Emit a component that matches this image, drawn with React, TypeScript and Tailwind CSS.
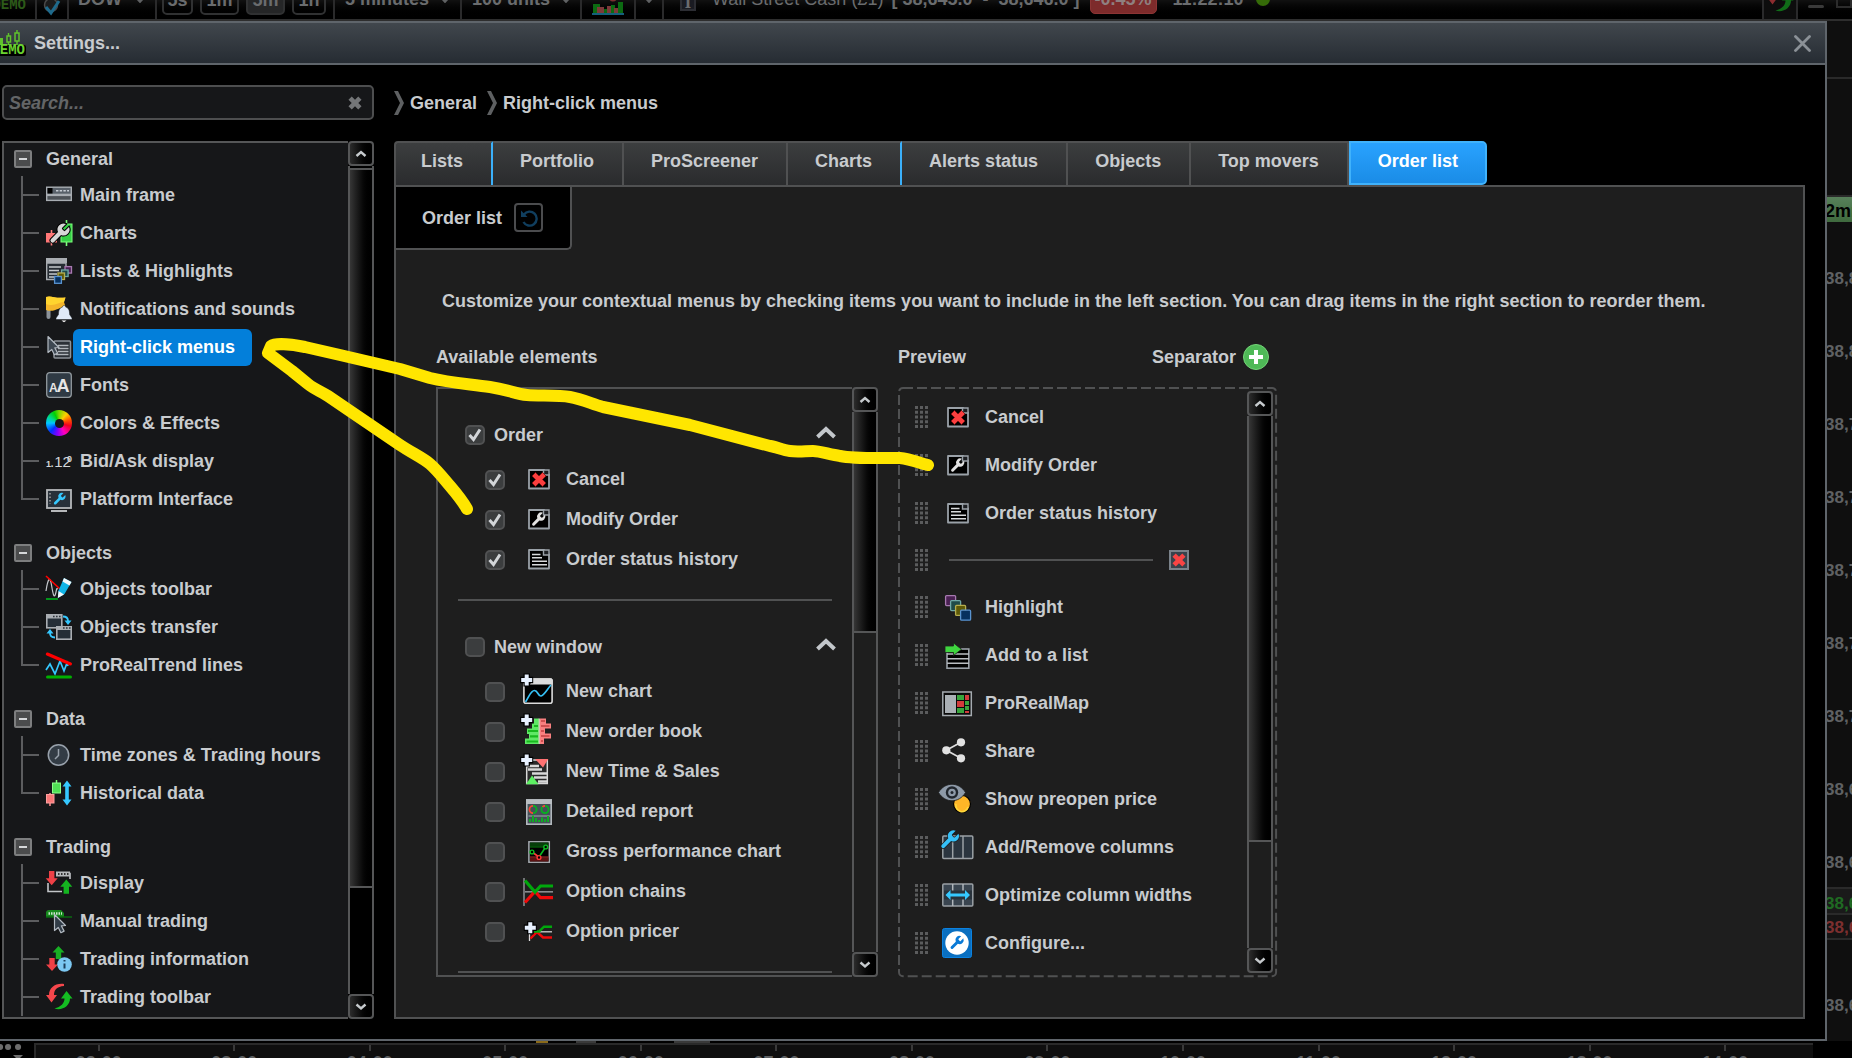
import { useId, type ReactNode } from "react";

const WRENCH =
  "M14.7 6.3a1 1 0 0 0 0 1.4l1.6 1.6a1 1 0 0 0 1.4 0l3.77-3.77a6 6 0 0 1-7.94 7.94l-6.91 6.91a2.12 2.12 0 0 1-3-3l6.91-6.91a6 6 0 0 1 7.94-7.94l-3.76 3.76z";
const UP = "M6 0 12 6.5H8.7V13H3.3V6.5H0z";
const DOWN = "M3.3 0H8.7V6.5H12L6 13 0 6.5H3.3z";
const CURSOR = "M0 0 11 11 6.8 11.3 9.6 16.6 6.4 18.2 3.8 13 0 16z";
const CROSS = "M3-.5 6.500 3 10-.5 13.500 3 10 6.500 13.500 10 10 13.500 6.500 10 3 13.500-.5 10 3 6.500-.5 3z";

/* ---------- icon frames ---------- */

function Small({ children }: { children: ReactNode }) {
  return (
    <svg viewBox="0 0 26 26" className="size-[26px] shrink-0 overflow-visible" aria-hidden="true">
      {children}
    </svg>
  );
}

function Large({ children }: { children: ReactNode }) {
  return (
    <svg viewBox="0 0 34 34" className="size-[34px] shrink-0 overflow-visible" aria-hidden="true">
      {children}
    </svg>
  );
}

function Squares() {
  return (
    <g strokeWidth="1.3">
      <rect x="4.6" y="5.6" width="10" height="10" rx="1" fill="#4a2153" stroke="#a77ab0" />
      <rect x="9.6" y="10.6" width="10" height="10" rx="1" fill="#1f4b49" stroke="#6fa9a6" />
      <rect x="14.6" y="15.4" width="10" height="10" rx="1" fill="#5f5a08" stroke="#b5ad4e" />
      <rect x="19.6" y="20.2" width="10" height="10" rx="1" fill="#07315f" stroke="#5a93cf" />
    </g>
  );
}

function Plus({ x, y }: { x: number; y: number }) {
  return (
    <g transform={`translate(${x} ${y})`}>
      <path d="M0-6.500V6.500M-6.500 0H6.500" stroke="#000" strokeWidth="6.500" />
      <path d="M0-5.500V5.500M-5.500 0H5.500" stroke="#e8f1ff" strokeWidth="4" />
    </g>
  );
}

function Doc({ children }: { children?: ReactNode }) {
  return (
    <Large>
      <path d="M7 8H22L27 12.5V26.5H7z" fill="#000" stroke="#9aa1a8" strokeWidth="1.8" strokeLinejoin="round" />
      <path d="M21.5 8V13H27V8z" fill="#1c1e21" stroke="#9aa1a8" strokeWidth="1.4" />
      {children}
    </Large>
  );
}

/* ---------- sidebar icons ---------- */

const MainFrame = () => (
  <Small>
    <rect x=".7" y="5.2" width="24.6" height="7.2" fill="#59616a" stroke="#a8adb2" strokeWidth="1.4" />
    <rect x="1.5" y="6" width="5" height="5.5" fill="#000" />
    <path d="M10 8.7H23" stroke="#c7cdd4" strokeWidth="1.5" strokeDasharray="2.4 1.3" />
    <rect x=".7" y="13.4" width="24.6" height="5" fill="#4d5257" stroke="#a8adb2" strokeWidth="1.4" />
  </Small>
);
const ChartsIcon = () => (
  <Small>
    <path d="M5.5 10V25.5" stroke="#ff8080" strokeWidth="1.6" />
    <rect x="0" y="13" width="11" height="9.5" fill="#f77" />
    <path d="M20.5 0V26" stroke="#7dff7d" strokeWidth="1.6" />
    <rect x="15" y="4" width="11" height="18" fill="#35cf45" stroke="#7dff7d" />
    <path d={WRENCH} transform="translate(1.5 1.5)" fill="#d7d7d7" stroke="#000" strokeWidth="2" paintOrder="stroke" />
  </Small>
);
const ListsIcon = () => (
  <Small>
    <path d="M0 0H21V5H0z" fill="#a9adb2" />
    <path d="M.7 5V21.5H12L20 13V5z" fill="#262c33" stroke="#a9adb2" strokeWidth="1.4" />
    <path d="M3 9H15M3 12.500H13M3 16H11M3 19H9" stroke="#c5c9cd" strokeWidth="1.4" />
    <g strokeWidth="1.3">
      <rect x="19" y="8.600" width="6.500" height="6.500" fill="#4a2153" stroke="#a77ab0" />
      <rect x="15.600" y="12" width="6.500" height="6.500" fill="#1f4b49" stroke="#6fa9a6" />
      <rect x="12" y="15" width="6.500" height="6.500" fill="#5f5a08" stroke="#b5ad4e" />
      <rect x="8.600" y="18.500" width="6.800" height="6.800" fill="#07315f" stroke="#5a93cf" />
    </g>
  </Small>
);
const NotificationsIcon = () => (
  <Small>
    <path d="M2.500 12V21" stroke="#8b9299" strokeWidth="4" strokeLinecap="round" />
    <path d="M0 1C5-1 9 3 19.500 1.500L18 6 19.500 11C12 11 9 17 0 14z" fill="#f4b52a" />
    <path d="M0 1C5-1 9 3 19.500 1.500L18 6C12 6 9 11 0 8z" fill="#ffd42e" />
    <path d="M18 9.500c1 0 1.500.7 1.600 1.500 3.400 1 4 4 4 7.500l2.400 3.500v1.500H10V22l2.500-3.500c0-3.500.6-6.500 4-7.500.1-.8.500-1.500 1.500-1.500z" fill="#dfe9f7" stroke="#17181a" strokeWidth=".5" />
    <path d="M15.500 24.500H20.500L18 26.300z" fill="#fff" />
  </Small>
);
const MenuIcon = () => (
  <Small>
    <rect x="8" y="7" width="16.500" height="17" rx="1" fill="#2b3036" stroke="#8d9399" strokeWidth="1.500" />
    <path d="M12 11.500H22.500M12 14.500H22.500M12 17.500H22.500M10 20.500H22.500" stroke="#b0b5ba" strokeWidth="1.400" />
    <path d={CURSOR} transform="translate(2 2.500)" fill="#3e4852" stroke="#b3bac2" strokeWidth="1.200" strokeLinejoin="round" />
  </Small>
);
const FontsIcon = () => (
  <Small>
    <rect x=".7" y=".7" width="24.600" height="24.600" rx="3" fill="#2f3a44" stroke="#929a9f" strokeWidth="1.300" />
    <text x="3" y="20" fontSize="12" fontWeight="700" fill="#e6e6e6" fontFamily="Liberation Sans, sans-serif">
      A
    </text>
    <text x="10.500" y="20" fontSize="18" fontWeight="700" fill="#e6e6e6" fontFamily="Liberation Sans, sans-serif">
      A
    </text>
  </Small>
);
const ColorsIcon = () => (
  <span className="grid size-[26px] shrink-0 place-items-center rounded-full bg-[conic-gradient(#7bd800,#ffd000_40deg,#ff5000_75deg,#f00020_105deg,#ff00c0_150deg,#8000ff_190deg,#0030ff_225deg,#00c8ff_270deg,#00d890_300deg,#00d000_335deg,#7bd800)]">
    <span className="size-[9px] rounded-full bg-[#161719]" />
  </span>
);
const BidAskIcon = () => (
  <Small>
    <g fill="#d3d6d9" fontFamily="Liberation Sans, sans-serif">
      <text x="0" y="19" fontSize="9" fontWeight="700">1</text>
      <text x="4" y="19" fontSize="15" fontWeight="400">.12</text>
      <text x="21" y="14" fontSize="9" fontWeight="700">0</text>
    </g>
  </Small>
);
const PlatformIcon = () => (
  <Small>
    <rect x="1" y="4" width="24" height="18" fill="#28313a" stroke="#b5b8bb" strokeWidth="1.800" />
    <path d="M4 7V18" stroke="#aaa" strokeWidth="1.400" strokeDasharray="1.500 2" />
    <path d={WRENCH} transform="translate(6 5.500) scale(.62)" fill="#35c8ff" />
    <path d="M5 25H21" stroke="#c9cbcd" strokeWidth="1.800" />
  </Small>
);
const ObjectsToolbarIcon = () => (
  <Small>
    <path d="M0 15C2 2 4 0 5.500 9S8 23 9.500 18 10 12 12 13" fill="none" stroke="#c4c8cc" strokeWidth="1.200" />
    <path d="M0 0 14 13" stroke="#f00" strokeWidth="1.600" />
    <path d="M0 23H12" stroke="#00a41c" strokeWidth="1.800" />
    <path d="M18 2 25.500 6 18.500 18 12 22 12.500 14.500z" fill="#11b4e6" />
    <path d="M18 2 25.500 6 23.500 9.500 16.500 5.500zM12.500 15 18 18.500 11.800 22z" fill="#f4f8fa" />
  </Small>
);
const TransferIcon = () => (
  <Small>
    <rect x=".8" y=".8" width="15" height="13" fill="#252e37" stroke="#a9adb2" strokeWidth="1.600" />
    <path d="M0 2.500H16" stroke="#a9adb2" strokeWidth="4" />
    <path d="M7 2.500H15" stroke="#30363c" strokeWidth="1.600" strokeDasharray="1.600 1.400" />
    <path d="M17 2.500C21 2.500 22 4 22 7M9 23.500C5 23.500 4 22 4 19" fill="none" stroke="#35c8ff" strokeWidth="1.800" />
    <path d="M18.500 6.500H25.500L22 11zM.5 19.500H7.500L4 15z" fill="#35c8ff" />
    <rect x="10.800" y="13" width="14.400" height="12.200" fill="#252e37" stroke="#a9adb2" strokeWidth="1.600" />
    <path d="M10 14H26" stroke="#a9adb2" strokeWidth="4" />
    <path d="M17 14H25" stroke="#30363c" strokeWidth="1.600" strokeDasharray="1.600 1.400" />
  </Small>
);
const TrendIcon = () => (
  <Small>
    <path d="M0 18 4 12 9 22 14 9 18 19 21 11 22 14" fill="none" stroke="#35c8ff" strokeWidth="1.700" />
    <path d="M1.300 2 24.500 12" stroke="#f00" strokeWidth="3" strokeLinecap="round" />
    <path d="M1.500 25H24.500" stroke="#00b000" strokeWidth="3" strokeLinecap="round" />
  </Small>
);
const ClockIcon = () => (
  <Small>
    <circle cx="12.500" cy="13" r="10.200" fill="#333c45" stroke="#98a1ab" strokeWidth="1.500" />
    <path d="M12.500 7V13.500L9 17" fill="none" stroke="#98a1ab" strokeWidth="1.500" />
  </Small>
);
const HistoryIcon = () => (
  <Small>
    <path d="M10.500 0V4" stroke="#7dff7d" strokeWidth="1.500" />
    <rect x="6.500" y="3" width="8" height="10" fill="#50e055" stroke="#8dff8d" />
    <path d="M4 13V26" stroke="#ff9090" strokeWidth="1.500" />
    <rect x=".5" y="14.500" width="7.500" height="8.500" fill="#f87878" stroke="#ffa0a0" />
    <path d="M21 4V22" stroke="#35c8ff" strokeWidth="3.600" />
    <path d="M16.500 6.500H25.500L21 .5zM16.500 19.500H25.500L21 25.500z" fill="#35c8ff" />
  </Small>
);
const DisplayIcon = () => (
  <Small>
    <path d="M2 13V21.500H16M10 3.500H24V9" fill="none" stroke="#c2c5c8" strokeWidth="1.600" />
    <path d="M10 4H24" stroke="#b5b8bb" strokeWidth="5" />
    <path d="M12 4H23" stroke="#333" strokeWidth="2" strokeDasharray="1.500 1.500" />
    <path d={DOWN} transform="translate(-.3 1) scale(1 1.100)" fill="#ee4046" />
    <path d={UP} transform="translate(14.300 9.500) scale(1 1.100)" fill="#14b520" />
  </Small>
);
const ManualIcon = () => (
  <Small>
    <path d="M0 4a3 3 0 0 1 3-2H15l3 3V9H0z" fill="#178a1d" />
    <path d="M0 9H26" stroke="#0a6b10" strokeWidth="1.500" />
    <path d="M2.500 5.500H16" stroke="#c9e8ca" strokeWidth="2.500" strokeDasharray="1.500 1" />
    <path d={CURSOR} transform="translate(8.500 6.500)" fill="#323d48" stroke="#b3bac2" strokeWidth="1.200" strokeLinejoin="round" />
  </Small>
);
const InfoIcon = () => (
  <Small>
    <path d={UP} transform="translate(6.500 0)" fill="#18b024" />
    <path d={DOWN} transform="translate(0 12)" fill="#ee4046" />
    <circle cx="18.500" cy="18.500" r="7.300" fill="#7cc8f2" />
    <path d="M18.500 17.500V22.500M18.500 14V15.500" stroke="#1d3f5a" strokeWidth="2" />
  </Small>
);
const ArrowsIcon = () => (
  <Small>
    <path d="M18 0C9-1 3 4 3 11H0L5.500 18.500 11 11H8C8 6 11 2.500 18 2z" fill="#f5474c" />
    <path d="M8.500 24.500C16 27 24 22 24 14.500H26.500L20.500 7 15 14.500H18.500C18.500 19 15 23 8.500 24.500z" fill="#14bd22" />
  </Small>
);

/* ---------- menu element icons ---------- */

const CancelIcon = () => (
  <Doc>
    <path d={CROSS} transform="translate(10.500 11)" fill="#fb3f3f" stroke="#7a1010" strokeWidth=".8" />
  </Doc>
);
const ModifyIcon = () => (
  <Doc>
    <path d={WRENCH} transform="translate(8 9) scale(.7)" fill="#e2e2e2" />
  </Doc>
);
const StatusIcon = () => (
  <Doc>
    <path d="M10 12.500H18.500M10 15.800H20M10 19.200H25M10 22.800H25" stroke="#d8dadc" strokeWidth="1.500" />
  </Doc>
);
const NewChart = () => (
  <Large>
    <rect x="1.900" y="5" width="28.200" height="24.200" rx="2" fill="#000" stroke="#dcdcdc" strokeWidth="1.600" />
    <path d="M11 4.200H29.500L30.800 6V10.500H8z" fill="#dcdcdc" />
    <path d="M3.500 28C8 21 9 16.500 12.500 16.500S16 22.500 19 22 26 14 29 11" fill="none" stroke="#35c0f5" strokeWidth="1.700" />
    <Plus x={4.700} y={6} />
  </Large>
);
const OrderBook = () => (
  <Large>
    <path d="M12 4.500H17V30H3V24.500H7V20H5V14.500H10V9.500H12z" fill="#5fe866" />
    <path d="M6 17H16M8 22.300H16M4.500 27.500H16M12 12H16" stroke="#18b91f" strokeWidth="2.200" />
    <path d="M18 4.500H24V9.500H29V14.500H23V19.500H29V24.500H22V30H18z" fill="#f98080" />
    <path d="M19 7H23M19 12H27.500M19 17H22M19 22H27.500M19 27H21" stroke="#cf5050" strokeWidth="2.200" />
    <path d="M17.300 4.500V30" stroke="#e9d2c8" strokeWidth="1.200" />
    <Plus x={4.700} y={6} />
  </Large>
);
const TimeSales = () => (
  <Large>
    <rect x="4.700" y="6" width="20.600" height="23.500" fill="#2a2a2a" stroke="#d8d8d8" strokeWidth="1.500" />
    <path d="M5 12H17M6 15.500H20M10 19.500H25M12 23.500H25M16 27.500H25" stroke="#d8d8d8" strokeWidth="2.300" />
    <path d="M13 5H26.300L21 13.500z" fill="#ff7272" />
    <path d="M4 30.300H16.500L10 21.500z" fill="#5df062" />
    <Plus x={4.700} y={6} />
  </Large>
);
const Report = () => (
  <Large>
    <rect x="4.800" y="6" width="24.400" height="24.200" fill="#46505a" stroke="#b2b8bd" strokeWidth="1.600" />
    <path d="M4 5.200H30V10H4z" fill="#b9bec2" />
    <g fill="none" strokeWidth="1.800">
      <circle cx="11" cy="15.500" r="3.600" stroke="#05b41f" />
      <path d="M11 11.900A3.600 3.600 0 0 0 11 19.100" stroke="#ff3b3b" />
      <circle cx="23" cy="15.500" r="3.600" stroke="#05b41f" />
      <path d="M20.500 13A3.600 3.600 0 0 1 23 11.900" stroke="#ff3b3b" />
    </g>
    <path d="M6.500 22H28" stroke="#747c84" strokeWidth="2" />
    <path d="M8 28V25M11 28V21.500M14 28V24M17 28V26M20 28V23.500M23 28V25M26 28V22" stroke="#0cb520" strokeWidth="1.800" />
  </Large>
);
const GrossChart = () => (
  <Large>
    <rect x="6.900" y="7.800" width="20.400" height="20.400" fill="#000" stroke="#a7adb2" strokeWidth="1.500" />
    <path d="M8 10.500H26.500" stroke="#063f0a" strokeWidth="4" />
    <path d="M8 13H26.500" stroke="#07800f" />
    <path d="M8 25.500H26.500" stroke="#5b1212" strokeWidth="4" />
    <path d="M8 23H26.500" stroke="#b02c2c" />
    <path d="M10 18 17 23" stroke="#ff3838" strokeWidth="1.600" />
    <path d="M18 21.500 23.700 13" stroke="#0cbb22" strokeWidth="1.600" />
    <g fill="#000" strokeWidth="1.400">
      <circle cx="10" cy="18" r="1.900" stroke="#0cbb22" />
      <circle cx="17" cy="23.500" r="1.900" stroke="#ff3838" />
      <circle cx="23.700" cy="13" r="1.900" stroke="#0cbb22" />
    </g>
  </Large>
);
const OptionChains = () => (
  <Large>
    <path d="M2 4V32" stroke="#7a7c7f" strokeWidth="1.800" />
    <path d="M3 17.800H31" stroke="#8a8c8f" strokeWidth="1.600" />
    <path d="M3 28.500 13 17.500 18.500 23.700H31" fill="none" stroke="#f00a0a" strokeWidth="3.200" />
    <path d="M3 6.500 13 18 18.500 12H31" fill="none" stroke="#00a80c" strokeWidth="3.200" />
  </Large>
);
const OptionPricer = () => (
  <Large>
    <path d="M7.500 14V27" stroke="#e0e0e0" strokeWidth="1.300" />
    <path d="M14 17.800H30" stroke="#d0d0d0" strokeWidth="1.300" />
    <path d="M8.500 24.500 15 18 21 23.500H30" fill="none" stroke="#f00a0a" strokeWidth="2.400" />
    <path d="M12 17.500H17L22 12.700H30" fill="none" stroke="#00a80c" strokeWidth="2.400" />
    <Plus x={8.300} y={13.700} />
  </Large>
);
const HighlightIcon = () => (
  <Large>
    <Squares />
  </Large>
);
const AddList = () => (
  <Large>
    <rect x="6" y="11" width="21.800" height="19.200" fill="#000" stroke="#9aa1a8" strokeWidth="1.600" />
    <path d="M6 16H28M6 20.700H28M6 25.300H28" stroke="#b9bdc1" strokeWidth="1.500" />
    <path d="M4 8H12.500V5L20.500 11.300 12.500 17.500V14.500H4z" fill="#3fd63f" stroke="#1e1e1e" strokeWidth=".8" />
  </Large>
);
const MapIcon = () => (
  <Large>
    <rect x="1.800" y="6" width="28.500" height="23.500" fill="#0a0a0a" stroke="#a5abb0" strokeWidth="1.500" />
    <path d="M4 9H15V27H4z" fill="#aab0b5" />
    <path d="M16 9H23V14H16zM16 22H23V27H16zM24 15H28V19H24zM24 20H28V24H24z" fill="#38a53c" />
    <path d="M16 15H23V21H16zM24 9H28V14H24zM24 25H28V27H24z" fill="#d13c3c" />
  </Large>
);
const ShareIcon = () => (
  <Large>
    <path d="M20 8.300 5.300 16.300 20 24.300" fill="none" stroke="#dedede" strokeWidth="1.700" />
    <g fill="#e2e2e2">
      <circle cx="5.300" cy="16.300" r="4.100" />
      <circle cx="20" cy="8.300" r="4.100" />
      <circle cx="20" cy="24.300" r="4.100" />
    </g>
  </Large>
);
const PreopenIcon = () => (
  <Large>
    <circle cx="21" cy="22" r="8.500" fill="#ffb627" stroke="#000" strokeWidth="1.200" />
    <path d="M15 22a6 6 0 0 0 12 3" fill="none" stroke="#ffd83c" strokeWidth="1.600" />
    <path d="M-2.500 10.500C4-.5 18-.5 24.500 10.500 18 21.500 4 21.500-2.500 10.500z" fill="#8e9aa8" stroke="#1a1a1a" strokeWidth=".8" />
    <circle cx="11" cy="10.500" r="6.200" fill="#20262d" />
    <circle cx="11" cy="10.500" r="3.800" fill="#8e9aa8" />
    <circle cx="11" cy="10.500" r="1.500" fill="#20262d" />
  </Large>
);
const ColumnsIcon = () => (
  <Large>
    <rect x="1.800" y="6" width="30" height="22.500" rx="1" fill="#2b353f" stroke="#9aa0a5" strokeWidth="1.500" />
    <path d="M11.700 6V28.500M22 6V28.500" stroke="#9aa0a5" strokeWidth="1.500" />
    <path d={WRENCH} transform="translate(-2.500 -1.500) scale(.93)" fill="#35c0f8" stroke="#1e1e1e" strokeWidth="1.500" paintOrder="stroke" />
  </Large>
);
const OptimizeIcon = () => (
  <Large>
    <rect x="1.800" y="6" width="30" height="22" rx="1" fill="#3a4550" stroke="#9aa0a5" strokeWidth="1.500" />
    <path d="M11.700 6V28M22 6V28" stroke="#b0b5ba" strokeWidth="1.500" />
    <path d="M3 17H31" stroke="#28323b" strokeWidth="9" />
    <path d="M8 17H26" stroke="#35c8ff" strokeWidth="3" />
    <path d="M9.500 12V22L4.500 17zM24 12V22L29 17z" fill="#35c8ff" />
  </Large>
);
const ConfigureIcon = () => (
  <Large>
    <rect x="1.500" y="2.500" width="29" height="29" rx="2" fill="#0a6fc0" stroke="#0b82e0" />
    <circle cx="16" cy="17" r="11.700" fill="#fff" />
    <path d={WRENCH} transform="translate(7.500 8.500) scale(.69)" fill="#0a7ad6" />
  </Large>
);

/* ---------- data ---------- */

type Item = { label: string; Icon: () => ReactNode };

const tree: { title: string; open?: boolean; items: Item[] }[] = [
  {
    title: "General",
    items: [
      { label: "Main frame", Icon: MainFrame },
      { label: "Charts", Icon: ChartsIcon },
      { label: "Lists & Highlights", Icon: ListsIcon },
      { label: "Notifications and sounds", Icon: NotificationsIcon },
      { label: "Right-click menus", Icon: MenuIcon },
      { label: "Fonts", Icon: FontsIcon },
      { label: "Colors & Effects", Icon: ColorsIcon },
      { label: "Bid/Ask display", Icon: BidAskIcon },
      { label: "Platform Interface", Icon: PlatformIcon },
    ],
  },
  {
    title: "Objects",
    items: [
      { label: "Objects toolbar", Icon: ObjectsToolbarIcon },
      { label: "Objects transfer", Icon: TransferIcon },
      { label: "ProRealTrend lines", Icon: TrendIcon },
    ],
  },
  {
    title: "Data",
    items: [
      { label: "Time zones & Trading hours", Icon: ClockIcon },
      { label: "Historical data", Icon: HistoryIcon },
    ],
  },
  {
    title: "Trading",
    open: true,
    items: [
      { label: "Display", Icon: DisplayIcon },
      { label: "Manual trading", Icon: ManualIcon },
      { label: "Trading information", Icon: InfoIcon },
      { label: "Trading toolbar", Icon: ArrowsIcon },
    ],
  },
];

const tabs = [
  { label: "Lists", mark: true },
  { label: "Portfolio" },
  { label: "ProScreener" },
  { label: "Charts", mark: true },
  { label: "Alerts status" },
  { label: "Objects" },
  { label: "Top movers" },
];

const sections: { title: string; checked: boolean; items: Item[] }[] = [
  {
    title: "Order",
    checked: true,
    items: [
      { label: "Cancel", Icon: CancelIcon },
      { label: "Modify Order", Icon: ModifyIcon },
      { label: "Order status history", Icon: StatusIcon },
    ],
  },
  {
    title: "New window",
    checked: false,
    items: [
      { label: "New chart", Icon: NewChart },
      { label: "New order book", Icon: OrderBook },
      { label: "New Time & Sales", Icon: TimeSales },
      { label: "Detailed report", Icon: Report },
      { label: "Gross performance chart", Icon: GrossChart },
      { label: "Option chains", Icon: OptionChains },
      { label: "Option pricer", Icon: OptionPricer },
    ],
  },
];

const preview: (Item | null)[] = [
  { label: "Cancel", Icon: CancelIcon },
  { label: "Modify Order", Icon: ModifyIcon },
  { label: "Order status history", Icon: StatusIcon },
  null,
  { label: "Highlight", Icon: HighlightIcon },
  { label: "Add to a list", Icon: AddList },
  { label: "ProRealMap", Icon: MapIcon },
  { label: "Share", Icon: ShareIcon },
  { label: "Show preopen price", Icon: PreopenIcon },
  { label: "Add/Remove columns", Icon: ColumnsIcon },
  { label: "Optimize column widths", Icon: OptimizeIcon },
  { label: "Configure...", Icon: ConfigureIcon },
];

const prices = ["38,820", "38,800", "38,780", "38,760", "38,740", "38,720", "38,700", "38,680"];
const hours = ["02:00", "03:00", "04:00", "05:00", "06:00", "07:00", "08:00", "09:00", "10:00", "11:00", "12:00", "13:00", "14:00"];

/* ---------- controls ---------- */

function ScrollButton({ down }: { down?: boolean }) {
  return (
    <button
      aria-label={down ? "Scroll down" : "Scroll up"}
      className="grid h-[25px] w-full shrink-0 place-items-center rounded-[4px] border-2 border-[#555657] bg-linear-to-r from-[#2c2c2c] to-black pr-px"
    >
      <svg viewBox="0 0 12 8" className="h-2 w-3" aria-hidden="true">
        <path d={down ? "M1.500 1.500 6 5.500 10.500 1.500" : "M1.500 6 6 2 10.500 6"} fill="none" stroke="#c6cacd" strokeWidth="2.400" />
      </svg>
    </button>
  );
}

function Scrollbar({ thumb, track }: { thumb: string; track: string }) {
  return (
    <div className="flex w-[26px] shrink-0 flex-col">
      <ScrollButton />
      <div className={`flex-1 border-x-2 border-[#555657] ${track}`}>
        <div className={`border-b-2 border-[#555657] bg-linear-to-r from-[#363636] to-black ${thumb}`} />
      </div>
      <ScrollButton down />
    </div>
  );
}

function Check({ id, checked }: { id: string; checked: boolean }) {
  return (
    <span className="grid shrink-0 place-items-center">
      <input
        id={id}
        type="checkbox"
        defaultChecked={checked}
        className="peer size-5 appearance-none rounded-[5px] border-2 border-[#505152] bg-[#3b3d3e] [grid-area:1/1]"
      />
      <svg viewBox="0 0 14 14" className="pointer-events-none hidden size-3.5 [grid-area:1/1] peer-checked:block" aria-hidden="true">
        <path d="M1.500 7 5.500 11.500 12 1.500" fill="none" stroke="#d2d5d8" strokeWidth="3" />
      </svg>
    </span>
  );
}

function Grip() {
  return (
    <svg viewBox="0 0 13 22" className="h-[22px] w-[13px] shrink-0" aria-hidden="true">
      {[1.500, 6.500, 11.500].map((x) => (
        <path key={x} d={`M${x} 0V22`} stroke="#5b5c5d" strokeWidth="3" strokeDasharray="3 1.750" />
      ))}
    </svg>
  );
}

function Section({ title, checked, items }: (typeof sections)[number]) {
  const id = useId();
  return (
    <section className="pt-[22px]">
      <div className="flex h-12 items-center pr-4 pl-[27px]">
        <Check id={id} checked={checked} />
        <label htmlFor={id} className="flex-1 pl-[9px]">
          {title}
        </label>
        <button aria-label={`Collapse ${title}`} className="pb-1.5">
          <svg viewBox="0 0 20 13" className="h-[13px] w-5" aria-hidden="true">
            <path d="M1.500 11 10 3 18.500 11" fill="none" stroke="#c3c7cb" strokeWidth="4" />
          </svg>
        </button>
      </div>
      {items.map(({ label, Icon }, i) => (
        <div key={label} className="flex h-10 items-center pl-[47px]">
          <span className="pt-0.5">
            <Check id={`${id}-${i}`} checked={checked} />
          </span>
          <label htmlFor={`${id}-${i}`} className="flex items-center gap-2.5 pl-[17px]">
            <Icon />
            {label}
          </label>
        </div>
      ))}
      <hr className="mt-5 mr-5 ml-5 border-0 border-t-2 border-[#505152]" />
    </section>
  );
}

function Sidebar() {
  return (
    <div className="flex min-h-0">
      <nav aria-label="Settings" className="min-w-0 flex-1 overflow-hidden border-2 border-r-0 border-[#555657] bg-[#161719]">
        {tree.map(({ title, open, items }) => (
          <div key={title} className="mt-[19px] first:mt-0">
            <div className="flex h-[33px] items-center gap-3.5 pb-0.5 pl-2.5">
              <button
                aria-label={`Collapse ${title}`}
                className="grid size-[18px] place-items-center rounded-[2px] border-2 border-[#7d7e7f] bg-[#4b4c4d]"
              >
                <span className="h-0.5 w-2 bg-[#d5d7d9]" />
              </button>
              <span>{title}</span>
            </div>
            <ul>
              {items.map(({ label, Icon }, i) => {
                const last = i === items.length - 1 && !open;
                const active = label === "Right-click menus";
                return (
                  <li key={label} className="flex h-[38px] items-center pl-[17px]">
                    <span className="flex h-full w-[18px] flex-col" aria-hidden="true">
                      <span className="h-5 border-b-2 border-l-2 border-[#5c5d5f]" />
                      <span className={last ? "flex-1" : "flex-1 border-l-2 border-[#5c5d5f]"} />
                    </span>
                    <a href="#" className="flex items-center gap-px pl-[7px]">
                      <Icon />
                      <span className={`py-1.5 pr-[17px] pl-[7px] leading-[25px] ${active ? "rounded-[6px] bg-[#037fda] text-white" : ""}`}>
                        {label}
                      </span>
                    </a>
                  </li>
                );
              })}
            </ul>
          </div>
        ))}
      </nav>
      <Scrollbar thumb="h-[87%] mt-[2px] border-t-2" track="bg-black" />
    </div>
  );
}

function Available() {
  return (
    <div className="flex w-[442px] flex-col gap-[17px]">
      <h2 className="leading-[26px]">Available elements</h2>
      <div className="flex min-h-0 flex-1">
        <div className="flex-1 overflow-hidden border-2 border-r-0 border-[#505152]">
          {sections.map((s) => (
            <Section key={s.title} {...s} />
          ))}
        </div>
        <Scrollbar thumb="h-[41%]" track="bg-[#1e1e1e]" />
      </div>
    </div>
  );
}

function Preview() {
  return (
    <div className="flex w-[379px] flex-col gap-[17px]">
      <div className="flex h-[26px] items-center">
        <h2 className="flex-1">Preview</h2>
        <label htmlFor="add-separator">Separator</label>
        <button
          id="add-separator"
          aria-label="Add separator"
          className="mr-2 ml-[7px] grid size-[26px] place-items-center rounded-full border border-[#74d678] bg-[#4fb957]"
        >
          <svg viewBox="0 0 14 14" className="size-3.5" aria-hidden="true">
            <path d="M7 0V14M0 7H14" stroke="#fff" strokeWidth="4" />
          </svg>
        </button>
      </div>
      <div className="relative flex min-h-0 flex-1 py-1 pr-1 pl-px">
        <svg className="pointer-events-none absolute inset-0 size-full overflow-visible" aria-hidden="true">
          <rect x="1" y="1" width="99.500%" height="99.700%" rx="4" fill="none" stroke="#505152" strokeWidth="2" strokeDasharray="10 4" />
        </svg>
        <ul className="flex-1 overflow-hidden pt-0.5">
          {preview.map((item) =>
            item ? (
              <li key={item.label} className="flex h-12 items-center pl-4">
                <Grip />
                <span className="flex items-center gap-2.5 pl-[13px]">
                  <item.Icon />
                  {item.label}
                </span>
              </li>
            ) : (
              <li key="separator" className="flex h-[46px] items-center pr-[58px] pl-4">
                <Grip />
                <hr className="mr-4 ml-[21px] flex-1 border-0 border-t-2 border-[#505152]" />
                <button
                  aria-label="Remove separator"
                  className="grid size-5 place-items-center border-2 border-[#7a828a] bg-[#38424c]"
                >
                  <svg viewBox="-1 -1 15 15" className="size-3.5" aria-hidden="true">
                    <path d={CROSS} fill="#f94444" />
                  </svg>
                </button>
              </li>
            ),
          )}
        </ul>
        <Scrollbar thumb="h-[80%]" track="bg-[#1e1e1e]" />
      </div>
    </div>
  );
}

function Crumb({ children }: { children: ReactNode }) {
  return (
    <li className="flex items-center gap-1.5">
      <svg viewBox="0 0 10 24" className="h-6 w-2.5" aria-hidden="true">
        <path d="M0 0H4L10 12 4 24H0L6 12z" fill="#5e6062" />
      </svg>
      <a href="#">{children}</a>
    </li>
  );
}

function Dialog() {
  return (
    <div
      role="dialog"
      aria-label="Settings"
      className="absolute top-[21px] right-[25px] bottom-[17px] left-0 flex flex-col border-2 border-l-0 border-[#5f656b] bg-black text-[#c8cbce]"
    >
      <header className="flex h-[42px] shrink-0 items-center border-b-2 border-[#5f656b] bg-linear-to-b from-[#41474d] to-[#262c33] pr-3.5">
        <span className="flex w-[26px] flex-col items-end overflow-hidden">
          <svg viewBox="0 0 26 15" className="h-[15px] w-[26px]" aria-hidden="true">
            <path d="M0 8H3V15H0z" fill="#5fc22c" />
            <path d="M8.500 3V6M8.500 12V15M17 0V3M17 11V15" stroke="#5fc22c" strokeWidth="1.400" />
            <path d="M7 6H10.500V12H7zM15 3H19V11H15z" fill="none" stroke="#5fc22c" strokeWidth="1.500" />
          </svg>
          <span className="rounded-r-[2px] bg-black pr-px font-['Liberation_Mono',monospace] text-[14px] leading-[11px] text-[#6ad230]">
            DEMO
          </span>
        </span>
        <h1 className="flex-1 pl-2">Settings...</h1>
        <button aria-label="Close">
          <svg viewBox="0 0 17 17" className="size-[17px]" aria-hidden="true">
            <path d="M1.500 1.500 15.500 15.500M15.500 1.500 1.500 15.500" stroke="#8b9197" strokeWidth="2.800" strokeLinecap="round" />
          </svg>
        </button>
      </header>
      <div className="grid min-h-0 flex-1 grid-cols-[372px_1fr] grid-rows-[35px_1fr] gap-x-5 gap-y-[21px] py-5 pr-5 pl-0.5">
        <div className="flex items-center rounded-[5px] border-2 border-[#4d4e4f] bg-[#161719] pr-2.5 pl-[5px]">
          <input
            type="text"
            aria-label="Search"
            placeholder="Search..."
            className="min-w-0 flex-1 bg-transparent italic outline-none placeholder:text-[#636567]"
          />
          <button aria-label="Clear search">
            <svg viewBox="-1 -1 15 15" className="size-3.5" aria-hidden="true">
              <path d={CROSS} fill="#747678" />
            </svg>
          </button>
        </div>
        <ol className="flex items-center gap-2.5">
          <Crumb>General</Crumb>
          <Crumb>Right-click menus</Crumb>
        </ol>
        <Sidebar />
        <main className="flex min-h-0 min-w-0 flex-col">
          <div role="tablist" className="flex h-11 shrink-0">
            {tabs.map(({ label, mark }) => (
              <button
                key={label}
                role="tab"
                className={`border-t-2 border-r-2 border-t-[#505152] bg-linear-to-b from-[#3c3e3f] to-[#2a2b2d] pr-7 pb-1.5 pl-[27px] first:rounded-tl-[4px] first:border-l-2 first:border-l-[#505152] first:pl-[25px] ${
                  mark ? "border-r-[#3bb0fa]" : "border-r-[#505152]"
                }`}
              >
                {label}
              </button>
            ))}
            <button
              role="tab"
              aria-selected="true"
              className="rounded-r-[5px] border-2 border-[#40b2fb] bg-linear-to-b from-[#29a2ff] to-[#1a8ce6] px-[27px] pb-1 text-white"
            >
              Order list
            </button>
          </div>
          <div className="flex min-h-0 flex-1 flex-col items-start border-2 border-[#505152] bg-[#1e1e1e]">
            <div className="flex h-[63px] shrink-0 items-center gap-3 rounded-br-[5px] border-r-2 border-b-2 border-[#505152] bg-black pr-[27px] pl-[26px]">
              <span>Order list</span>
              <button aria-label="Reset order list" className="grid size-[29px] place-items-center rounded-[4px] border-2 border-[#4b4c4e]">
                <svg viewBox="0 0 18 18" className="size-[18px]" aria-hidden="true">
                  <path d="M4 5.500A7 7 0 1 1 3.500 13" fill="none" stroke="#103e5e" strokeWidth="2.400" />
                  <path d="M1 1.500V8H7.500z" fill="#103e5e" />
                </svg>
              </button>
            </div>
            <p className="mt-[39px] ml-[46px] leading-6">
              Customize your contextual menus by checking items you want to include in the left section. You can drag items in the right
              section to reorder them.
            </p>
            <div className="mt-[31px] mb-10 ml-10 flex min-h-0 flex-1 gap-5">
              <Available />
              <Preview />
            </div>
          </div>
        </main>
      </div>
    </div>
  );
}

/* ---------- trading window behind the dialog ---------- */

function Caret() {
  return (
    <svg viewBox="0 0 12 8" className="h-2 w-3" aria-hidden="true">
      <path d="M1 1 6 6.500 11 1" fill="none" stroke="#5f6163" strokeWidth="2.500" />
    </svg>
  );
}

function Cell({ className, children }: { className: string; children: ReactNode }) {
  return <div className={`flex h-full shrink-0 items-center border-r-2 border-[#2a2a2b] ${className}`}>{children}</div>;
}

function Toolbar() {
  return (
    <div className="flex h-[21px] items-end overflow-hidden border-b-2 border-[#2e2e2e] bg-linear-to-b from-[#111] to-black">
      <div className="flex h-10 min-w-0 flex-1 items-center text-[#6a6c6e]">
        <Cell className="w-[37px]">
          <span className="flex w-[26px] justify-end overflow-hidden pt-3 font-['Liberation_Mono',monospace] text-[14px] leading-[11px] text-[#2c5a18]">
            DEMO
          </span>
        </Cell>
        <Cell className="w-8 justify-center pt-4">
          <svg viewBox="0 0 18 18" className="size-[18px]" aria-hidden="true">
            <circle cx="8" cy="7" r="6.500" fill="#1c1c1c" stroke="#4a4a4a" strokeWidth="1.500" />
            <path d="M3 9 8 15 16 3" fill="none" stroke="#1e6a8c" strokeWidth="3" />
          </svg>
        </Cell>
        <Cell className="w-[88px] gap-3 pl-[9px]">
          <span>DOW</span>
          <Caret />
        </Cell>
        <Cell className="w-[178px] gap-[7px] pl-[5px]">
          <button className="h-[31px] w-[31px] rounded-[5px] border-2 border-[#303132]">5s</button>
          <button className="h-[31px] w-[39px] rounded-[5px] border-2 border-[#303132]">1m</button>
          <button className="h-[31px] w-[39px] rounded-[5px] border-2 border-[#303132] bg-[#252627]">5m</button>
          <button className="h-[31px] w-[34px] rounded-[5px] border-2 border-[#303132]">1h</button>
        </Cell>
        <Cell className="w-[127px] gap-2.5 pl-2.5">
          <span>5 minutes</span>
          <Caret />
        </Cell>
        <Cell className="w-[120px] gap-2.5 pl-2.5">
          <span>100 units</span>
          <Caret />
        </Cell>
        <Cell className="w-[54px] justify-center pt-3">
          <svg viewBox="0 0 32 22" className="h-[22px] w-8" aria-hidden="true">
            <circle cx="21" cy="3" r="3.500" fill="none" stroke="#7a3030" strokeWidth="2" />
            <path d="M1 10H8V19H1zM12 15H16V19H12zM19 11H23V19H19zM26 8H31V19H26z" fill="#0c6b12" />
            <path d="M5 13H12V19H5zM15 12H19V19H15zM22 14H26V19H22z" fill="#7d3a3a" />
            <path d="M0 20H32" stroke="#14607c" strokeWidth="2" />
          </svg>
        </Cell>
        <Cell className="w-7 justify-center">
          <Caret />
        </Cell>
        <span className="mr-4 ml-4 grid h-6 w-4 shrink-0 place-items-center border-2 border-[#2c2d33] bg-[#1a1b22] font-serif">I</span>
        <span className="shrink-0 pr-2 font-normal">Wall Street Cash (£1)</span>
        <span className="shrink-0 whitespace-pre">{"[ 38,645.0  -  38,646.0 ]"}</span>
        <span className="mr-3 ml-2.5 shrink-0 rounded-[5px] border border-[#8c3434] bg-[#7d2b2b] px-1 text-[#8f8080]">-0.45%</span>
        <span className="shrink-0 px-1">11:22:10</span>
        <span className="ml-2 size-[14px] shrink-0 rounded-full bg-[#356b08]" />
        <div className="ml-auto flex h-full w-[90px] shrink-0 items-center">
          <div className="flex h-full w-[42px] items-center justify-center border-x-2 border-[#2a2a2b] bg-[#0d0d0d]">
            <span className="opacity-55">
              <ArrowsIcon />
            </span>
          </div>
          <span className="mt-[14px] ml-2.5 h-[3px] w-4 shrink-0 rounded bg-[#3a3a3a]" />
          <span className="ml-3 h-[18px] w-4 shrink-0 border-2 border-[#2c2c2c]" />
        </div>
      </div>
    </div>
  );
}

function PriceScale() {
  return (
    <aside className="ml-auto w-[27px] overflow-hidden bg-[#0f0f0f] text-[17px] leading-5 text-[#5f6163]">
      <div className="h-[58px] border-b-2 border-[#2a2a2a]" />
      <div className="h-[118px] border-b-2 border-[#2a2a2a]" />
      <div className="mb-[47px] h-[25px] bg-linear-to-b from-[#57805a] to-[#3f6a3e] text-lg leading-7 text-black">2mn</div>
      {prices.map((p) => (
        <div key={p} className="h-[73px]">
          {p}
        </div>
      ))}
      <div className="h-[34px]">38,660</div>
      <div className="h-[26px] border-t-2 border-[#2a2a2a] bg-[#1a1a1a] pt-[5px] text-[#1f6a22]">38,646</div>
      <div className="mb-14 h-[27px] border-y-2 border-[#2a2a2a] bg-[#141414] pt-[3px] text-[#7d2f2f]">38,643</div>
      <div>38,620</div>
    </aside>
  );
}

function TimeAxis() {
  return (
    <div className="flex h-[17px] overflow-hidden bg-black">
      <svg viewBox="0 0 34 17" className="h-[17px] w-[34px] shrink-0" aria-hidden="true">
        <path d="M0 6H.1M8 6H8.100M18 6H18.100" stroke="#6d6d6d" strokeWidth="6" strokeLinecap="round" />
        <path d="M13 14H23L18 19z" fill="#6d6d6d" />
      </svg>
      <div className="mr-[39px] min-w-0 flex-1">
        <div className="flex h-0.5 pl-[502px]" aria-hidden="true">
          <span className="w-3 bg-[#8a6a1a]" />
          <span className="ml-7 w-5 bg-[#3a3a3a]" />
          <span className="ml-[78px] w-9 bg-[#3a3a3a]" />
        </div>
        <div className="border-t-2 border-l-2 border-[#2a2a2a] bg-[#0f0f0f] pr-5">
          <div className="-ml-[5px] flex">
            {hours.map((h) => (
              <div key={h} className="flex flex-1 flex-col items-center text-[#5f6163]">
                <span className="h-1.5 w-0.5 shrink-0 bg-[#3a3a3a]" />
                <span className="leading-[25px]">{h}</span>
              </div>
            ))}
          </div>
        </div>
      </div>
    </div>
  );
}

function Annotation() {
  return (
    <svg className="pointer-events-none absolute top-0 left-0 h-[520px] w-[940px]" aria-hidden="true">
      <path
        d="M467 509C462 500 456 493 450 486S437 470 430 464 412 453 400 445L350 411 328 396C322 392 314 389 308 384L292 371 268 353 271 346C275 343 290 344 305 347L340 355 400 369 430 378C450 383 470 384 490 387S515 394 527 395 558 395 570 397 592 404 603 407L690 425 770 446C776 447 783 450 790 451S806 451 813 451 831 455 840 456C855 459 880 458 900 458 910 459 920 463 928 465"
        fill="none"
        stroke="#ffe600"
        strokeWidth="12"
        strokeLinecap="round"
        strokeLinejoin="round"
      />
    </svg>
  );
}

export default function App() {
  return (
    <div className="relative flex h-screen flex-col overflow-hidden bg-black font-['Liberation_Sans',Arial,sans-serif] text-lg font-bold">
      <Toolbar />
      <div className="flex min-h-0 flex-1">
        <PriceScale />
      </div>
      <TimeAxis />
      <Dialog />
      <Annotation />
    </div>
  );
}
